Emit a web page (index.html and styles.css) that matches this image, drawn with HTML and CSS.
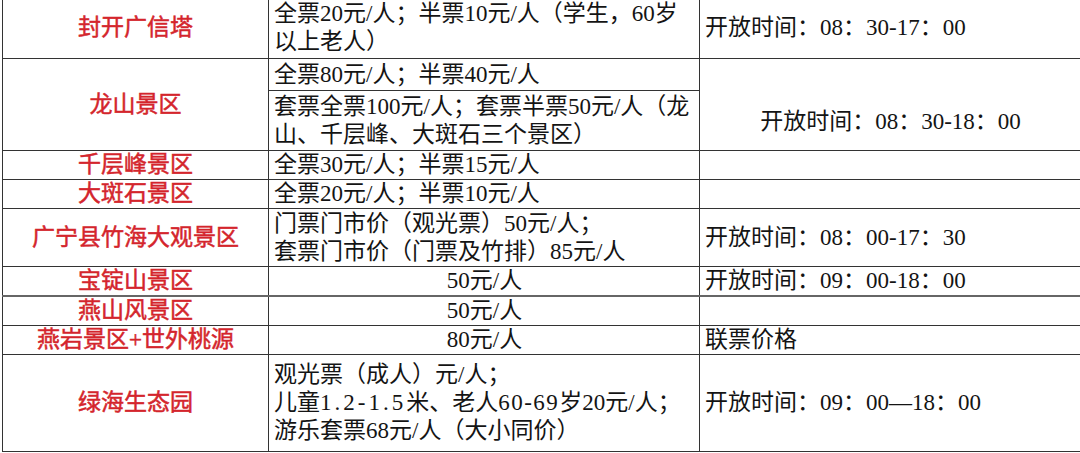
FILE: index.html
```html
<!DOCTYPE html>
<html lang="zh-CN">
<head>
<meta charset="utf-8">
<title>景区门票</title>
<link rel="stylesheet" href="styles.css">
</head>
<body>
<table class="tickets">
  <colgroup>
    <col class="c-name">
    <col class="c-price">
    <col class="c-note">
  </colgroup>
  <tbody>
    <tr class="r1">
      <td class="name">封开广信塔</td>
      <td class="price">全票20元/人；半票10元/人（学生，60岁<br>以上老人）</td>
      <td class="note">开放时间：08：30-17：00</td>
    </tr>
    <tr class="r2a">
      <td class="name" rowspan="2">龙山景区</td>
      <td class="price">全票80元/人；半票40元/人</td>
      <td class="note note-center" rowspan="2">开放时间：08：30-18：00</td>
    </tr>
    <tr class="r2b">
      <td class="price">套票全票100元/人；套票半票50元/人（龙<br>山、千层峰、大斑石三个景区）</td>
    </tr>
    <tr class="r-one">
      <td class="name">千层峰景区</td>
      <td class="price">全票30元/人；半票15元/人</td>
      <td class="note"></td>
    </tr>
    <tr class="r-one">
      <td class="name">大斑石景区</td>
      <td class="price">全票20元/人；半票10元/人</td>
      <td class="note"></td>
    </tr>
    <tr class="r-two">
      <td class="name">广宁县竹海大观景区</td>
      <td class="price">门票门市价（观光票）50元/人；<br>套票门市价（门票及竹排）85元/人</td>
      <td class="note">开放时间：08：00-17：30</td>
    </tr>
    <tr class="r-one r-thick">
      <td class="name">宝锭山景区</td>
      <td class="price price-center">50元/人</td>
      <td class="note">开放时间：09：00-18：00</td>
    </tr>
    <tr class="r-one">
      <td class="name">燕山风景区</td>
      <td class="price price-center">50元/人</td>
      <td class="note"></td>
    </tr>
    <tr class="r-one">
      <td class="name">燕岩景区+世外桃源</td>
      <td class="price price-center">80元/人</td>
      <td class="note">联票价格</td>
    </tr>
    <tr class="r-three">
      <td class="name">绿海生态园</td>
      <td class="price">观光票（成人）元/人；<br>儿童<span class="spaced">1.2-1.5</span>米、老人<span class="spaced-sm">60-69</span>岁20元/人；<br>游乐套票68元/人（大小同价）</td>
      <td class="note">开放时间：09：00—18：00</td>
    </tr>
  </tbody>
</table>
</body>
</html>
```
FILE: styles.css
```css
html, body {
  margin: 0;
  padding: 0;
  background: #ffffff;
}

body {
  width: 1080px;
  height: 453px;
  overflow: hidden;
}

.tickets {
  margin: -4px 0 0 2px;
  width: 1078px;
  table-layout: fixed;
  border-collapse: collapse;
  font-family: "Liberation Serif", "Noto Sans CJK SC", serif;
  font-size: 23px;
  line-height: 28px;
  color: #141414;
}

.c-name { width: 266px; }
.c-price { width: 431px; }
.c-note { width: 381px; }

.tickets td {
  border: 1px solid #333333;
  padding: 0 4px 0 5px;
  vertical-align: middle;
  white-space: nowrap;
}

.tickets td.name {
  text-align: center;
  color: #d4252c;
  font-weight: 400;
  -webkit-text-stroke: 0.5px #d4252c;
  padding: 0;
}

.tickets td.price-center {
  text-align: center;
}

.tickets td.note-center {
  text-align: center;
  vertical-align: bottom;
  padding-bottom: 14px;
}

.spaced {
  letter-spacing: 3px;
}

.spaced-sm {
  letter-spacing: 1.5px;
}

.r1 { height: 62px; }
.r2a { height: 32px; }
.r2b { height: 60px; }
.r-one { height: 29px; }
.r-two { height: 58px; }
.r-three { height: 97px; }

.r-thick td {
  border-bottom: 2px solid #666666;
}
```
